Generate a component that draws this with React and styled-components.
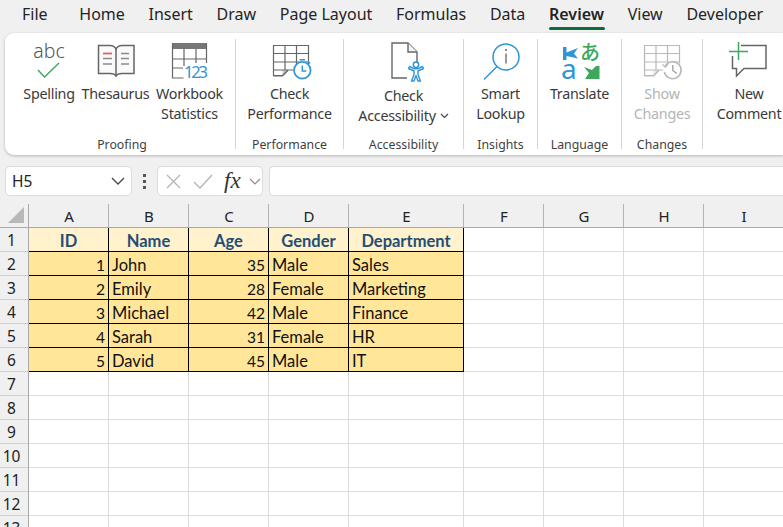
import React from "react";
import styled, { createGlobalStyle } from "styled-components";

const GlobalStyle = createGlobalStyle`
  html, body { margin: 0; padding: 0; background: #f0f0f0; }
  body { font-family: "Noto Sans", "Open Sans", sans-serif; color: #242424; }
`;

const Page = styled.div`
  width: 783px;
  height: 527px;
  overflow: hidden;
  display: flex;
  flex-direction: column;
  background: #f0f0f0;
`;

const MenuBar = styled.nav`
  flex: none;
  height: 33px;
  padding-left: 22px;
  display: flex;
  gap: 23.7px;
  font-size: 16px;
  white-space: nowrap;
`;

const MenuItem = styled.div`
  position: relative;
  height: 30px;
  line-height: 28px;
  font-weight: ${(p) => (p.$active ? 600 : 400)};
  margin-right: ${(p) => (p.$first ? 8 : 0)}px;
  ${(p) =>
    p.$active &&
    `
    &:after {
      content: "";
      position: absolute;
      left: 0;
      right: -1px;
      bottom: 0;
      height: 3px;
      border-radius: 2px;
      background: #0e6b3e;
    }
  `}
`;

const Ribbon = styled.section`
  flex: none;
  height: 122px;
  margin-left: 5px;
  padding: 6px 0;
  box-sizing: border-box;
  display: flex;
  background: #fff;
  border-radius: 9px 0 0 9px;
  box-shadow: 0 1px 3px rgba(0, 0, 0, 0.25);
`;

const Group = styled.div`
  flex: none;
  width: ${(p) => p.$width}px;
  box-sizing: border-box;
  display: flex;
  flex-direction: column;
  border-right: ${(p) => (p.$last ? "none" : "1px solid #d4d4d4")};
`;

const Tools = styled.div`
  flex: 1;
  display: flex;
  justify-content: ${(p) => (p.$inset ? "flex-start" : "center")};
  gap: 7px;
  padding: 3px 0 0 ${(p) => p.$inset || 0}px;
`;

const Tool = styled.div`
  display: flex;
  flex-direction: column;
  align-items: center;
  width: ${(p) => p.$width}px;
`;

const ToolIcon = styled.svg`
  display: block;
  flex: none;
  width: 40px;
  height: 40px;
  overflow: visible;
`;

const ToolLabel = styled.div`
  margin-top: ${(p) => (p.$drop ? 4 : 2)}px;
  font-size: 14.3px;
  letter-spacing: -0.25px;
  line-height: 20px;
  text-align: center;
  white-space: nowrap;
  color: ${(p) => (p.$disabled ? "#b4b4b4" : "#3a3a3a")};
`;

const GroupName = styled.div`
  margin-bottom: -3px;
  font-size: 12.3px;
  line-height: 14px;
  text-align: center;
  color: #3f3f3f;
  padding-left: ${(p) => p.$shift || 0}px;
  white-space: nowrap;
`;

const Chevron = styled.svg`
  width: 9px;
  height: 6px;
  margin-left: 4px;
  vertical-align: 2px;
`;

const FormulaBar = styled.div`
  flex: none;
  height: 30px;
  margin: 11px 0 8px 5px;
  display: flex;
  align-items: stretch;
`;

const FieldBox = styled.div`
  box-sizing: border-box;
  display: flex;
  align-items: center;
  background: #fff;
  border: 1px solid #dcdcdc;
  border-radius: 5px;
`;

const NameBox = styled(FieldBox)`
  width: 127px;
  padding: 0 6px 0 6px;
  justify-content: space-between;
  font-size: 15.5px;
`;

const Grip = styled.div`
  width: 25px;
  display: flex;
  flex-direction: column;
  align-items: center;
  justify-content: center;
  gap: 3px;
  & > i {
    width: 3px;
    height: 3px;
    background: #555;
  }
`;

const FnBox = styled(FieldBox)`
  width: 106px;
  padding-left: 8px;
`;

const FxLabel = styled.span`
  width: 25px;
  margin-left: 11px;
  font-family: "Liberation Serif", serif;
  font-style: italic;
  font-size: 23px;
  line-height: 26px;
  color: #333;
`;

const FormulaInput = styled(FieldBox)`
  flex: 1;
  margin-left: 6px;
  border-right: none;
  border-radius: 5px 0 0 5px;
`;

const Sheet = styled.div`
  flex: 1;
  display: grid;
  grid-template-columns: 29px repeat(4, 80px) 115px repeat(4, 80px);
  grid-auto-rows: 24px;
  background: #fff;
  overflow: hidden;
`;

const Corner = styled.div`
  box-sizing: border-box;
  display: flex;
  align-items: flex-end;
  justify-content: flex-end;
  padding: 0 3px 4px 0;
  background: #f0f0f0;
  border-right: 1px solid #a8a8a8;
  border-bottom: 1px solid #a8a8a8;
`;

const ColHead = styled.div`
  box-sizing: border-box;
  padding-left: 1px;
  background: #f0f0f0;
  border-right: 1px solid #b4b4b4;
  border-bottom: 1px solid #a8a8a8;
  text-align: center;
  font-size: 15px;
  line-height: 24px;
  color: #222;
`;

const RowHead = styled.div`
  box-sizing: border-box;
  background: #f0f0f0;
  border-right: 1px solid #a8a8a8;
  border-bottom: 1px solid #cfcfcf;
  padding-right: 5px;
  text-align: center;
  font-size: 15.5px;
  line-height: 24px;
  color: #222;
`;

const Cell = styled.div`
  box-sizing: border-box;
  padding: 0 3px;
  font-family: Lato, "Liberation Sans", sans-serif;
  font-size: 16.5px;
  line-height: 26px;
  white-space: nowrap;
  color: #111;
  background: #fff;
  border-right: 1px solid #dcdcdc;
  border-bottom: 1px solid #dcdcdc;
`;

const DataCell = styled(Cell)`
  background: #ffe699;
  border-color: #000;
  text-align: ${(p) => (p.$right ? "right" : "left")};
  font-size: ${(p) => (p.$right ? 15.5 : 16.5)}px;
`;

const TitleCell = styled(Cell)`
  background: #fff2cc;
  border-color: #000;
  text-align: center;
  font-weight: 700;
  color: #1f4e79;
`;

const GRAY = "#666";
const LIGHT = "#b9b9b9";
const BLUE = "#2f95d8";
const GREEN = "#3da85a";

const SpellingIcon = () => (
  <ToolIcon viewBox="0 0 40 40">
    <text x="20" y="16" textAnchor="middle" fontFamily="Noto Sans, sans-serif" fontSize="19.500" fontWeight="300" fill="#555">abc</text>
    <path d="M9 28l6.500 7L30 21" fill="none" stroke={GREEN} strokeWidth="1.400" />
  </ToolIcon>
);

const ThesaurusIcon = () => (
  <ToolIcon viewBox="0 0 40 40">
    <path d="M2.500 3.500H14c3 0 5 1.500 6 3.500 1-2 3-3.500 6-3.500h12v28H26c-3 0-5 .8-6 2.500-1-1.700-3-2.500-6-2.500H2.500z" fill="#fafafa" stroke={GRAY} strokeWidth="1.500" />
    <path d="M20 7v27" stroke={GRAY} strokeWidth="1.500" />
    <path d="M7 11.500h9" stroke="#ee5a5a" strokeWidth="1.800" />
    <path d="M7 16.500h9M7 22h9M25 11.500h8M25 16.500h8M25 22h8" stroke="#8a8a8a" strokeWidth="1.500" />
  </ToolIcon>
);

const StatsIcon = () => (
  <ToolIcon viewBox="0 0 40 40">
    <rect x="2" y="1" width="35" height="6" fill="#777" />
    <path d="M13.500 36H2.500V1.500M36.500 1.500V21M14 7v17M26 7v14M2 17h35M2 26h11" fill="none" stroke={GRAY} strokeWidth="1.200" />
    <text x="14" y="36" fontFamily="Noto Sans, sans-serif" fontSize="16.500" fill={BLUE} textLength="24">123</text>
  </ToolIcon>
);

const SheetGrid = ({ color, dx = 0 }) => (
  <g transform={`translate(${dx} 0)`}>
    <path d="M3.500 34V3.500h35V22M3.500 11.500h35M3.500 20h35M3.500 28h20M15 3.500V28M26.500 3.500V22" fill="none" stroke={color} strokeWidth="1.200" />
    <path d="M3.500 33.800h9l5.500-5.500" fill="none" stroke={color} strokeWidth="1.500" />
    <path d="M12.500 33.800v-5.500h5.500z" fill={color} opacity="0.35" />
  </g>
);

const PerformanceIcon = () => (
  <ToolIcon viewBox="0 0 40 40">
    <SheetGrid color={GRAY} />
    <circle cx="32.300" cy="28.300" r="8.300" fill="#fff" stroke={BLUE} strokeWidth="1.700" />
    <path d="M32.300 23.500v5.500h4" fill="none" stroke={BLUE} strokeWidth="1.400" />
    <path d="M29.500 17.800h5.500M38 19.500l2 2" stroke={BLUE} strokeWidth="1.600" />
  </ToolIcon>
);

const AccessibilityIcon = () => (
  <ToolIcon viewBox="0 0 40 40">
    <path d="M33 21V10l-9-9H8v35h15" fill="none" stroke={GRAY} strokeWidth="1.400" />
    <path d="M24 1v9h9" fill="#f4f4f4" stroke={GRAY} strokeWidth="1.400" />
    <circle cx="32" cy="22.700" r="2.700" fill="#fff" stroke={BLUE} strokeWidth="1.500" />
    <path d="M24.500 26.500l5.500 2.500v3.500L27.500 39h2.500l2-5.500 2 5.500h2.500L34 32.500V29l5.500-2.500-1-2-5 2.300h-3l-5-2.300z" fill="#fff" stroke={BLUE} strokeWidth="1.400" strokeLinejoin="round" />
  </ToolIcon>
);

const LookupIcon = () => (
  <ToolIcon viewBox="0 0 40 40">
    <circle cx="25" cy="15" r="13" fill="#fff" stroke={BLUE} strokeWidth="1.500" />
    <path d="M16 24.500L3 37.500" stroke={BLUE} strokeWidth="1.500" />
    <path d="M25 11.500v10" stroke="#555" strokeWidth="1.200" />
    <circle cx="25" cy="8" r="0.900" fill="#555" />
  </ToolIcon>
);

const TranslateIcon = () => (
  <ToolIcon viewBox="0 0 40 40">
    <path d="M3 5h3.500v5.500L18 6l-4 5.500 4 5-11.500-2.500V18H3z" fill={BLUE} />
    <text x="1" y="37" fontFamily="Noto Sans, sans-serif" fontSize="28" fill={BLUE}>a</text>
    <text x="20" y="17.500" fontFamily="Noto Sans CJK JP, sans-serif" fontSize="20" fontWeight="500" fill={GREEN}>あ</text>
    <path d="M39.500 24v13H25l4-6-5-6 8 3 4-4z" fill={GREEN} />
  </ToolIcon>
);

const ChangesIcon = () => (
  <ToolIcon viewBox="0 0 40 40">
    <SheetGrid color={LIGHT} dx={-1} />
    <circle cx="30.800" cy="28.300" r="9.500" fill="#fff" />
    <path d="M23.500 23.500a8.500 8.500 0 1 1-1.200 6.500" fill="none" stroke={LIGHT} strokeWidth="1.600" />
    <path d="M20.500 22.500l3 2.500 2.500-3" fill="none" stroke={LIGHT} strokeWidth="1.300" />
    <path d="M30.800 23v5.500l4 3" fill="none" stroke="#9c9c9c" strokeWidth="1.300" />
  </ToolIcon>
);

const CommentIcon = () => (
  <ToolIcon viewBox="0 0 40 40">
    <path d="M12 3.500h25v23H15l-7.500 7.500v-7.500H3.500V14" fill="#fff" stroke={GRAY} strokeWidth="1.500" />
    <path d="M0 9.500h19M9.500 0v18" stroke={GREEN} strokeWidth="1.500" />
  </ToolIcon>
);

const SmallChevron = ({ color = "#444" }) => (
  <Chevron viewBox="0 0 9 6">
    <path d="M1 1l3.500 3.500L8 1" fill="none" stroke={color} strokeWidth="1.200" />
  </Chevron>
);

const menu = ["File", "Home", "Insert", "Draw", "Page Layout", "Formulas", "Data", "Review", "View", "Developer"];

const groups = [
  {
    name: "Proofing",
    width: 231,
    shift: 4,
    inset: 17,
    tools: [
      { icon: SpellingIcon, lines: ["Spelling"], width: 54 },
      { icon: ThesaurusIcon, lines: ["Thesaurus"], width: 65 },
      { icon: StatsIcon, lines: ["Workbook", "Statistics"], width: 69 },
    ],
  },
  { name: "Performance", width: 108, tools: [{ icon: PerformanceIcon, lines: ["Check", "Performance"], width: 84 }] },
  { name: "Accessibility", width: 120, tools: [{ icon: AccessibilityIcon, lines: ["Check", "Accessibility"], width: 96, drop: true, menu: true }] },
  { name: "Insights", width: 74, tools: [{ icon: LookupIcon, lines: ["Smart", "Lookup"], width: 50 }] },
  { name: "Language", width: 84, tools: [{ icon: TranslateIcon, lines: ["Translate"], width: 60 }] },
  { name: "Changes", width: 81, tools: [{ icon: ChangesIcon, lines: ["Show", "Changes"], width: 60, disabled: true }] },
  { name: "", width: 92, last: true, tools: [{ icon: CommentIcon, lines: ["New", "Comment"], width: 66 }] },
];

const columns = ["A", "B", "C", "D", "E", "F", "G", "H", "I"];
const titles = ["ID", "Name", "Age", "Gender", "Department"];
const people = [
  [1, "John", 35, "Male", "Sales"],
  [2, "Emily", 28, "Female", "Marketing"],
  [3, "Michael", 42, "Male", "Finance"],
  [4, "Sarah", 31, "Female", "HR"],
  [5, "David", 45, "Male", "IT"],
];
const blanks = (n) => Array.from({ length: n });

export default function App() {
  return (
    <Page>
      <GlobalStyle />
      <MenuBar>
        {menu.map((item) => (
          <MenuItem key={item} $active={item === "Review"} $first={item === "File"}>{item}</MenuItem>
        ))}
      </MenuBar>
      <Ribbon>
        {groups.map((group) => (
          <Group key={group.name || "comments"} $width={group.width} $last={group.last}>
            <Tools $inset={group.inset}>
              {group.tools.map(({ icon: Icon, lines, width, drop, menu: hasMenu, disabled }) => (
                <Tool key={lines.join()} $width={width}>
                  <Icon />
                  <ToolLabel $drop={drop} $disabled={disabled}>
                    {lines.map((line, i) => (
                      <div key={line}>
                        {line}
                        {hasMenu && i === lines.length - 1 && <SmallChevron />}
                      </div>
                    ))}
                  </ToolLabel>
                </Tool>
              ))}
            </Tools>
            <GroupName $shift={group.shift}>{group.name}</GroupName>
          </Group>
        ))}
      </Ribbon>
      <FormulaBar>
        <NameBox>
          H5
          <svg width="14" height="8" viewBox="0 0 14 8">
            <path d="M1 1l6 6 6-6" fill="none" stroke="#444" strokeWidth="1.300" />
          </svg>
        </NameBox>
        <Grip><i /><i /><i /></Grip>
        <FnBox>
          <svg width="15" height="15" viewBox="0 0 15 15">
            <path d="M1 1l13 13M14 1L1 14" stroke="#b4b4b4" strokeWidth="1.300" />
          </svg>
          <svg width="20" height="15" viewBox="0 0 20 15" style={{ marginLeft: 12 }}>
            <path d="M1 8l6 6L19 1" fill="none" stroke="#b4b4b4" strokeWidth="1.300" />
          </svg>
          <FxLabel>fx</FxLabel>
          <svg width="12" height="7" viewBox="0 0 12 7">
            <path d="M1 1l5 5 5-5" fill="none" stroke="#8c8c8c" strokeWidth="1.200" />
          </svg>
        </FnBox>
        <FormulaInput />
      </FormulaBar>
      <Sheet>
        <Corner>
          <svg width="17" height="16" viewBox="0 0 17 16">
            <path d="M16 0v16H0z" fill="#b8b8b8" />
          </svg>
        </Corner>
        {columns.map((col) => (
          <ColHead key={col}>{col}</ColHead>
        ))}
        <RowHead>1</RowHead>
        {titles.map((title) => (
          <TitleCell key={title}>{title}</TitleCell>
        ))}
        {blanks(4).map((_, i) => (
          <Cell key={i} />
        ))}
        {people.map((person, r) => (
          <React.Fragment key={person[1]}>
            <RowHead>{r + 2}</RowHead>
            {person.map((value, c) => (
              <DataCell key={c} $right={typeof value === "number"}>{value}</DataCell>
            ))}
            {blanks(4).map((_, i) => (
              <Cell key={i} />
            ))}
          </React.Fragment>
        ))}
        {blanks(7).map((_, r) => (
          <React.Fragment key={r}>
            <RowHead>{r + 7}</RowHead>
            {columns.map((col) => (
              <Cell key={col} />
            ))}
          </React.Fragment>
        ))}
      </Sheet>
    </Page>
  );
}
